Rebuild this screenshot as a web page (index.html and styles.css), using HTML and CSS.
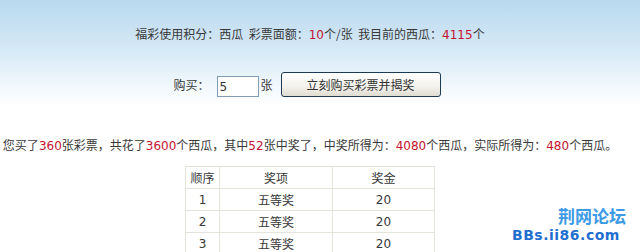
FILE: index.html
```html
<!DOCTYPE html>
<html lang="zh-CN">
<head>
    <meta charset="UTF-8">
    <title>福彩</title>
    <link rel="stylesheet" href="styles.css">
</head>
<body>
    <div class="wrap">
        <p class="info">福彩使用积分：西瓜&nbsp;&nbsp;彩票面额：<span class="num">10</span>个/张&nbsp;&nbsp;我目前的西瓜：<span class="num">4115</span>个</p>

        <div class="buy">
            <span class="buy-label">购买：</span>
            <input type="text" class="buy-input" value="5">
            <span class="buy-unit">张</span>
            <button class="buy-btn">立刻购买彩票并揭奖</button>
        </div>

        <p class="result">您买了<span class="num">360</span>张彩票，共花了<span class="num">3600</span>个西瓜，其中<span class="num">52</span>张中奖了，中奖所得为：<span class="num">4080</span>个西瓜，实际所得为：<span class="num">480</span>个西瓜。</p>

        <table class="prizes">
            <tr>
                <th class="col-no">顺序</th>
                <th class="col-name">奖项</th>
                <th class="col-money">奖金</th>
            </tr>
            <tr><td>1</td><td>五等奖</td><td>20</td></tr>
            <tr><td>2</td><td>五等奖</td><td>20</td></tr>
            <tr><td>3</td><td>五等奖</td><td>20</td></tr>
        </table>
    </div>

    <!-- watermark -->
    <div class="mark">
        <div class="mark-cn">荆网论坛</div>
        <div class="mark-en">BBs.ii86.com</div>
    </div>
</body>
</html>
```

FILE: styles.css
```css
body {
    margin: 0;
    font-family: "Noto Sans CJK TC", sans-serif;
    font-size: 12px;
    color: #383838;
    background: #fff linear-gradient(to bottom, #b9d9ef 0px, #d6e9f6 50px, #ffffff 105px) no-repeat;
    height: 252px;
    overflow: hidden;
}
.wrap {
    width: 620px;
    text-align: center;
}
.num {
    font-family: "DejaVu Sans", sans-serif;
    color: #c4122f;
}
.info {
    margin: 0;
    padding-top: 26px;
    line-height: 16px;
}
.buy {
    margin-top: 29px;
    height: 25px;
    padding-right: 6px;
    display: flex;
    align-items: center;
    justify-content: center;
}
.buy-label {
    margin-right: 7px;
}
.buy-input {
    width: 36px;
    height: 17px;
    padding: 2px 2px 0;
    border: 1px solid #7f9db9;
    font-family: "DejaVu Sans", sans-serif;
    font-size: 12px;
    color: #333;
    margin-top: 3px;
}
.buy-unit {
    margin: 0 8px 0 2px;
}
.buy-btn {
    width: 160px;
    height: 25px;
    border: 1px solid #1e3b55;
    border-radius: 3px;
    background: linear-gradient(to bottom, #ffffff, #f3f2ec 60%, #dfdcd0);
    font-family: inherit;
    font-size: 12px;
    color: #333;
    padding: 0;
}
.result {
    margin: 40px 0 0;
    line-height: 16px;
    white-space: nowrap;
}
.prizes {
    margin: 12px auto 0;
    border-collapse: collapse;
    border-right: 1px solid #9a9a9a;
    border-bottom: 1px solid #9a9a9a;
}
.prizes th, .prizes td {
    border: 1px solid #e4e4da;
    height: 21px;
    padding: 0;
    font-weight: normal;
    text-align: center;
    font-family: "DejaVu Sans", "Noto Sans CJK TC", sans-serif;
}
.col-no {
    width: 33px;
}
.col-name {
    width: 112px;
}
.col-money {
    width: 101px;
}
.mark {
    position: absolute;
    left: 512px;
    top: 205px;
    width: 114px;
    text-align: right;
}
.mark-cn {
    font-size: 17px;
    font-weight: bold;
    color: #3c9ae6;
    line-height: 22px;
    font-family: "Noto Sans CJK SC", sans-serif;
}
.mark-en {
    font-size: 14px;
    font-weight: bold;
    color: #1f6fd0;
    line-height: 16px;
    text-align: left;
    font-family: "DejaVu Sans", sans-serif;
    letter-spacing: 0.5px;
}
```
